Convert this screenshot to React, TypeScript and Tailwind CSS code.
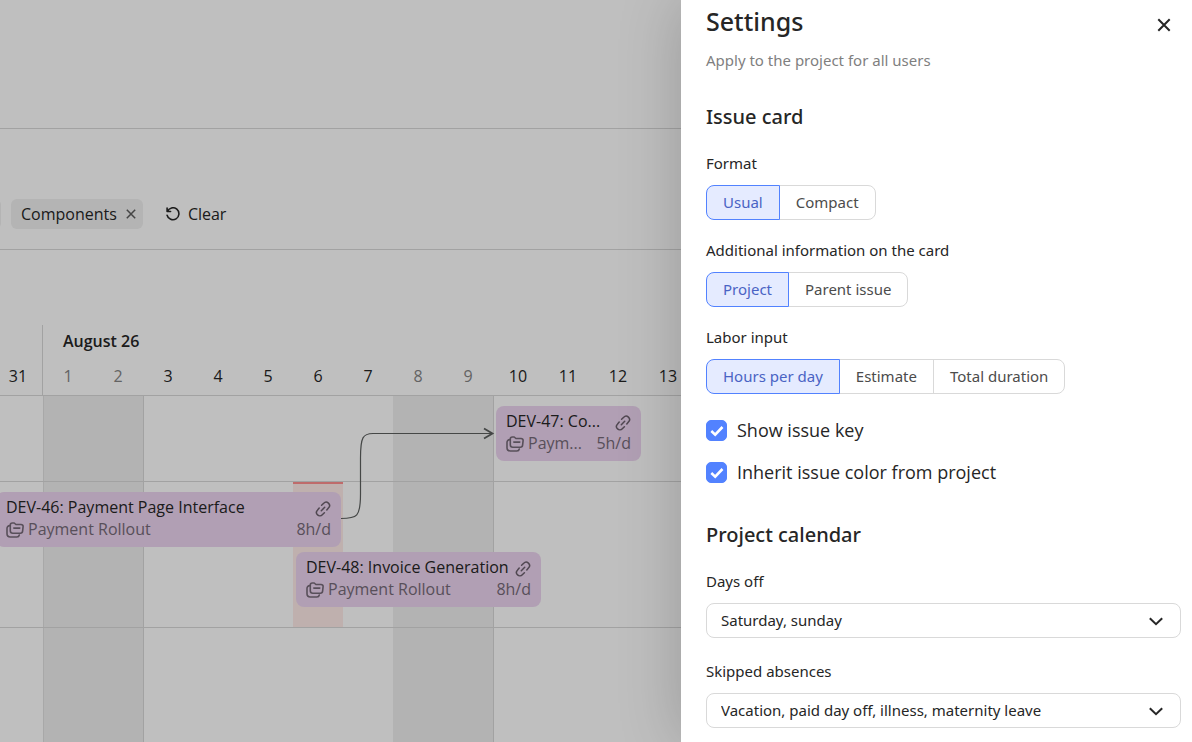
import React, { useState } from 'react';
import { clsx } from 'clsx';

interface Day {
  label: string;
  weekend?: boolean;
}

interface Issue {
  title: string;
  project: string;
  hours: string;
  className: string;
}

const DAYS: Day[] = [
  { label: '31' },
  { label: '1', weekend: true },
  { label: '2', weekend: true },
  { label: '3' },
  { label: '4' },
  { label: '5' },
  { label: '6' },
  { label: '7' },
  { label: '8', weekend: true },
  { label: '9', weekend: true },
  { label: '10' },
  { label: '11' },
  { label: '12' },
  { label: '13' },
];

const FIRST_ROW: Issue[] = [
  { title: 'DEV-47: Co...', project: 'Paym...', hours: '5h/d', className: 'col-start-11 col-span-3' },
];

const SECOND_ROW: Issue[] = [
  { title: 'DEV-46: Payment Page Interface', project: 'Payment Rollout', hours: '8h/d', className: 'col-start-1 col-span-7 row-start-1' },
  { title: 'DEV-48: Invoice Generation', project: 'Payment Rollout', hours: '8h/d', className: 'col-start-7 col-span-5 row-start-2' },
];

const LinkIcon = () => (
  <svg viewBox="0 0 16 16" className="mt-1 size-4 shrink-0" fill="none" stroke="currentColor" strokeWidth="1.5" strokeLinecap="round" aria-hidden="true">
    <path d="M6.600 4.300 8.700 2.300a3.300 3.300 0 0 1 4.900 4.500L11.800 8.900M9.400 11.700l-2.100 2a3.300 3.300 0 0 1-4.900-4.500L4.200 7.100M6.300 9.700l3.400-3.400" />
  </svg>
);

const ProjectIcon = () => (
  <svg viewBox="0 0 18 16" className="mt-0.5 h-4 w-[18px] shrink-0" fill="none" stroke="currentColor" strokeWidth="1.6" strokeLinecap="round" strokeLinejoin="round" aria-hidden="true">
    <path d="M4.300 3a2 2 0 0 1 2-2h1.900l1.700 1.500h5.200a2 2 0 0 1 2 2.200l-.5 4.500a2.200 2.200 0 0 1-2.200 2H6.800a2.500 2.500 0 0 1-2.500-2.500zM7.800 6.100h6" />
    <path d="M3.900 3.600a2.700 2.700 0 0 0-2.900 2.700v5.400A3.300 3.300 0 0 0 4.300 15h6.500a2.500 2.500 0 0 0 2.500-2" />
  </svg>
);

const IssueCard: React.FC<{ issue: Issue }> = ({ issue }) => (
  <article className={clsx('ml-[3px] mr-[2px] h-[55px] rounded-lg bg-[#edd5f0] px-[10px] pt-1', issue.className)}>
    <div className="flex items-center justify-between leading-[22px] text-[#262626]">
      <h3 className="whitespace-nowrap">{issue.title}</h3>
      <span className="text-[#6b5f6d]"><LinkIcon /></span>
    </div>
    <div className="flex items-center gap-1 leading-[22px] text-[#766a78]">
      <ProjectIcon />
      <span className="flex-1 whitespace-nowrap">{issue.project}</span>
      <span>{issue.hours}</span>
    </div>
  </article>
);

const Timeline = () => (
  <div className="flex flex-1 flex-col">
    <div className="-ml-[7px] grid h-[146px] grid-cols-[50px_1fr] grid-rows-[40px_1fr] border-b border-[#d9d9d9] pt-[75px]">
      <div className="col-start-1 row-start-1 row-span-2 border-r border-[#d9d9d9]" />
      <div className="pt-[5px] pl-5 leading-[22px] font-semibold text-[#262626]">August 26</div>
      <div className="col-start-1 col-span-2 row-start-2 grid grid-cols-[repeat(14,50px)] text-center leading-[22px]">
        {DAYS.map((day) => (
          <span key={day.label} className={day.weekend ? 'text-[#858585]' : 'text-[#262626]'}>{day.label}</span>
        ))}
      </div>
    </div>

    <div className="relative -ml-[7px] flex-1">
      {/* weekend shading behind the rows */}
      <div className="absolute inset-0 grid grid-cols-[repeat(14,50px)]">
        <div className="col-start-2 col-span-2 border-l border-[#e0e0e0] bg-[#efefef]" />
        <div className="col-start-4 border-l border-[#d9d9d9]" />
        <div className="col-start-9 col-span-2 bg-[#efefef]" />
        <div className="col-start-11 border-l border-[#d9d9d9]" />
      </div>

      <div className="relative">
        <div className="grid grid-cols-[repeat(14,50px)] border-b border-[#d9d9d9] pt-[10px] pb-5">
          {FIRST_ROW.map((issue) => <IssueCard key={issue.title} issue={issue} />)}
        </div>
        <div className="relative border-b border-[#d9d9d9] pt-[10px] pb-5">
          <div className="absolute inset-0 grid grid-cols-[repeat(14,50px)]">
            <div className="col-start-7 border-t-2 border-[#ff8f8f] bg-[#ffebe9]" />
          </div>
          <div className="relative grid grid-cols-[repeat(14,50px)] gap-y-[5px]">
            {SECOND_ROW.map((issue) => <IssueCard key={issue.title} issue={issue} />)}
          </div>
        </div>

        <svg className="absolute top-0 left-[348px]" width="154" height="130" fill="none" stroke="#5c5f5e" strokeWidth="1.2" aria-hidden="true">
          <path d="M0 122.5C16 122.5 19.500 121 19.500 98V62C19.500 41 22 37.500 32 37.500H151" />
          <path d="M143 32.500l8.500 5-8.500 5" strokeWidth="1.8" />
        </svg>
      </div>
    </div>
  </div>
);

const Segmented: React.FC<{ label: string; name: string; options: string[] }> = ({ label, name, options }) => {
  const [value, setValue] = useState(options[0]);

  return (
    <fieldset className="mb-5">
      <legend className="mb-3 leading-5">{label}</legend>
      <div className="flex">
        {options.map((option) => (
          <label
            key={option}
            className={clsx(
              'relative -ml-px flex h-[35px] cursor-pointer items-center border px-4 first:ml-0 first:rounded-l-lg last:rounded-r-lg',
              value === option ? 'z-10 border-[#5282ff] bg-[#e5ebff] text-[#4a63c4]' : 'border-[#d9d9d9] text-[#4c4c4c]',
            )}
          >
            <input type="radio" name={name} className="sr-only" checked={value === option} onChange={() => setValue(option)} />
            {option}
          </label>
        ))}
      </div>
    </fieldset>
  );
};

const Checkbox: React.FC<{ label: string }> = ({ label }) => (
  <label className="flex cursor-pointer items-center gap-[10px] font-['Open_Sans','Noto_Sans',sans-serif] text-lg leading-[22px]">
    <span className="grid">
      <input type="checkbox" defaultChecked className="peer col-start-1 row-start-1 size-[21px] appearance-none rounded-[5px] border border-[#d9d9d9] checked:border-[#5282ff] checked:bg-[#5282ff]" />
      <svg viewBox="0 0 21 21" className="pointer-events-none col-start-1 row-start-1 size-[21px] opacity-0 peer-checked:opacity-100" fill="none" stroke="#fff" strokeWidth="2.600" aria-hidden="true">
        <path d="M5.300 11l3.900 3.600 7.300-7.600" />
      </svg>
    </span>
    {label}
  </label>
);

const SelectField: React.FC<{ id: string; label: string; value: string }> = ({ id, label, value }) => (
  <div className="mb-[23px]">
    <label htmlFor={id} className="mb-3 block leading-5">{label}</label>
    <div className="grid items-center">
      <select id={id} className="col-start-1 row-start-1 h-[35px] w-full appearance-none rounded-lg border border-[#d9d9d9] bg-white pr-10 pl-[14px]">
        <option>{value}</option>
      </select>
      <svg viewBox="0 0 16 16" className="pointer-events-none col-start-1 row-start-1 mr-[17px] size-4 justify-self-end" fill="none" stroke="#262626" strokeWidth="2" aria-hidden="true">
        <path d="M1.800 5.200l6.200 6 6.200-6" />
      </svg>
    </div>
  </div>
);

const SettingsPanel = () => (
  <aside className="z-20 w-[511px] shrink-0 bg-white pt-[3px] pr-[11px] pl-[25px] font-['Noto_Sans',sans-serif] text-[15px] text-[#262626] shadow-[0_0_60px_rgba(0,0,0,0.2)]">
    <header className="flex items-start justify-between">
      <h1 className="text-[25px] leading-9 font-medium">Settings</h1>
      <button type="button" aria-label="Close" className="mt-[15px] mr-[10px]">
        <svg viewBox="0 0 14 14" className="size-[14px]" fill="none" stroke="currentColor" strokeWidth="2" aria-hidden="true">
          <path d="M1.300 1.300l11.400 11.400M12.700 1.300L1.300 12.700" />
        </svg>
      </button>
    </header>
    <p className="mt-[11px] leading-5 text-[#7f7f7f]">Apply to the project for all users</p>

    <section className="mt-[33px]">
      <h2 className="mb-[22px] text-xl leading-7 font-medium">Issue card</h2>
      <Segmented label="Format" name="format" options={['Usual', 'Compact']} />
      <Segmented label="Additional information on the card" name="info" options={['Project', 'Parent issue']} />
      <Segmented label="Labor input" name="labor" options={['Hours per day', 'Estimate', 'Total duration']} />
      <div className="mt-[25px] flex flex-col gap-5">
        <Checkbox label="Show issue key" />
        <Checkbox label="Inherit issue color from project" />
      </div>
    </section>

    <section className="mt-[38px]">
      <h2 className="mb-[22px] text-xl leading-7 font-medium">Project calendar</h2>
      <SelectField id="days-off" label="Days off" value="Saturday, sunday" />
      <SelectField id="absences" label="Skipped absences" value="Vacation, paid day off, illness, maternity leave" />
    </section>
  </aside>
);

export default function App() {
  return (
    <div className="flex h-screen overflow-hidden bg-white font-['Open_Sans','Noto_Sans',sans-serif] text-base">
      <main className="relative flex min-w-0 flex-1 flex-col overflow-hidden">
        <div className="h-[129px] border-b border-[#d9d9d9]" />
        <div className="flex h-[121px] items-start gap-[10px] border-b border-[#d9d9d9] pt-[70px] text-[#262626]">
          <div className="-ml-[11px] h-[30px] w-3 shrink-0 rounded-r-md bg-[#f0f0f0]" />
          <div className="flex h-[30px] items-center gap-[9px] rounded-md bg-[#f0f0f0] pr-[7px] pl-[10px] leading-[22px]">
            Components
            <button type="button" aria-label="Remove Components">
              <svg viewBox="0 0 10 10" className="size-[10px]" fill="none" stroke="#5c5c5c" strokeWidth="1.500" aria-hidden="true">
                <path d="M.8.8l8.400 8.400M9.200.8L.8 9.200" />
              </svg>
            </button>
          </div>
          <button type="button" className="ml-[13px] flex h-[29px] items-center gap-2">
            <svg viewBox="0 0 14 14" className="size-[14px]" fill="none" stroke="currentColor" strokeWidth="1.600" strokeLinecap="round" strokeLinejoin="round" aria-hidden="true">
              <path d="M1.100 1v3.500h3.500M1.400 4.400A6 6 0 1 1 1.100 8.200" />
            </svg>
            Clear
          </button>
        </div>
        <Timeline />
        <div className="absolute inset-0 bg-black/25" />
      </main>
      <SettingsPanel />
    </div>
  );
}
